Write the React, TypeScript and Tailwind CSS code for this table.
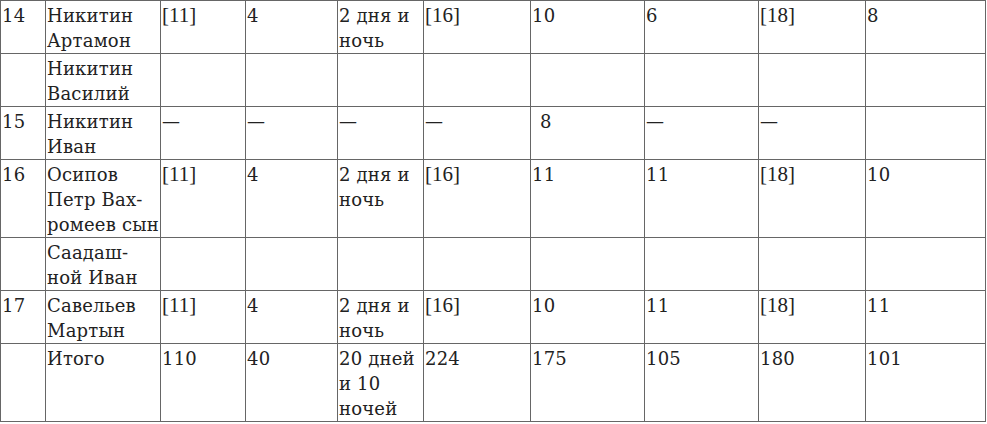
import React from "react";

type Cell = React.ReactNode;

const B = ({ children }: { children: React.ReactNode }) => (
  <span className="font-['Liberation_Serif',serif] text-[21px] tracking-normal">{children}</span>
);

const widths = [45, 115, 85, 92, 86, 107, 114, 114, 107, 120];

const rows: Cell[][] = [
  ["14", <>Никитин<br />Артамон</>, <B>[11]</B>, "4", <>2 дня и<br />ночь</>, <B>[16]</B>, "10", "6", <B>[18]</B>, "8"],
  ["", <>Никитин<br />Василий</>, "", "", "", "", "", "", "", ""],
  ["15", <>Никитин<br />Иван</>, "—", "—", "—", "—", <span className="pl-2">8</span>, "—", "—", ""],
  ["16", <>Осипов<br />Петр Вах-<br />ромеев сын</>, <B>[11]</B>, "4", <>2 дня и<br />ночь</>, <B>[16]</B>, "11", "11", <B>[18]</B>, "10"],
  ["", <>Саадаш-<br />ной Иван</>, "", "", "", "", "", "", "", ""],
  ["17", <>Савельев<br />Мартын</>, <B>[11]</B>, "4", <>2 дня и<br />ночь</>, <B>[16]</B>, "10", "11", <B>[18]</B>, "11"],
  ["", "Итого", "110", "40", <>20 дней<br />и 10<br />ночей</>, "224", "175", "105", "180", "101"],
];

export default function App() {
  return (
    <div className="w-[987px] h-[424px] bg-white overflow-hidden">
      <table className="border-collapse table-fixed text-[#222] font-['DejaVu_Serif',serif] text-[18px] leading-[25px] tracking-[0.2px]">
        <colgroup>
          {widths.map((w, i) => (
            <col key={i} style={{ width: w }} />
          ))}
        </colgroup>
        <tbody>
          {rows.map((r, i) => (
            <tr key={i}>
              {r.map((c, j) => (
                <td
                  key={j}
                  className="border border-[#666] align-top px-[1px] pt-[2px] pb-0 whitespace-nowrap overflow-hidden"
                >
                  {c}
                </td>
              ))}
            </tr>
          ))}
        </tbody>
      </table>
    </div>
  );
}
